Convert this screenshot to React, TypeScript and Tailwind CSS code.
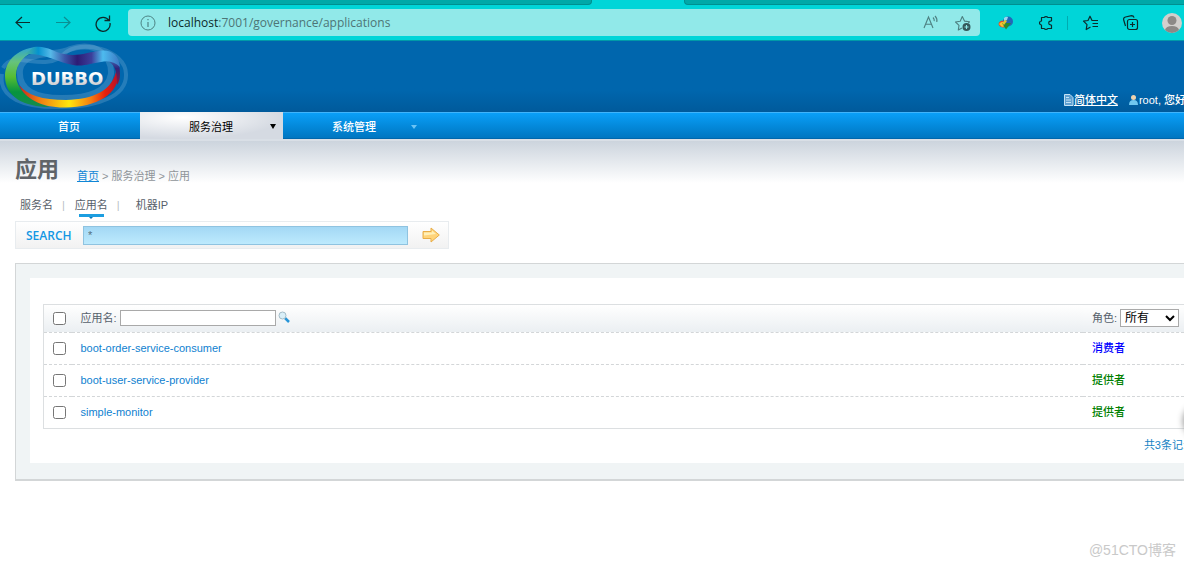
import React, { useState } from 'react';

interface Application {
  name: string;
  role: 'consumer' | 'provider';
}

const applications: Application[] = [
  { name: 'boot-order-service-consumer', role: 'consumer' },
  { name: 'boot-user-service-provider', role: 'provider' },
  { name: 'simple-monitor', role: 'provider' },
];

const roleLabels = {
  consumer: '消费者',
  provider: '提供者',
};

function BrowserBar() {
  return (
    <div className="bg-[#00d5d8] font-['Open_Sans','Noto_Sans',sans-serif]">
      {/* Bottom edge of the tab strip */}
      <div className="flex h-[5px]">
        <div className="w-1/2 rounded-br-sm border-b border-r border-[#008f90] bg-[#00a8a8]" />
        <div className="w-[92px] shrink-0" />
        <div className="flex-1 rounded-bl-sm border-b border-l border-[#008f90] bg-[#00a8a8]" />
      </div>

      <div className="flex h-9 items-center border-b border-[#009aa8]">
        <button aria-label="Back" className="ml-3.5 text-[#0c2b2c]">
          <svg width="18" height="18" viewBox="0 0 18 18" fill="none" stroke="currentColor" strokeWidth="1.2">
            <path d="M16 8.500H2M8 3L2 8.500l6 5.500" />
          </svg>
        </button>
        <button aria-label="Forward" className="ml-[22px] text-[#0b8f92]">
          <svg width="18" height="18" viewBox="0 0 18 18" fill="none" stroke="currentColor" strokeWidth="1.2">
            <path d="M2 8.500h14M10 3l6 5.500-6 5.500" />
          </svg>
        </button>
        <button aria-label="Refresh" className="ml-[22px] text-[#0c2b2c]">
          <svg width="18" height="18" viewBox="0 0 18 18" fill="none" stroke="currentColor" strokeWidth="1.3">
            <path d="M15 6.500A7 7 0 1 0 16 9M15.500 1.500v5h-5" />
          </svg>
        </button>

        <div className="ml-4 flex h-[27px] min-w-0 flex-1 items-center rounded bg-[#91e9e9] px-3">
          <svg className="shrink-0" width="16" height="16" viewBox="0 0 16 16" fill="none" stroke="#4d8485">
            <circle cx="8" cy="8" r="7" />
            <path d="M8 7v5M8 4v1.300" strokeWidth="1.200" />
          </svg>
          <p className="ml-3 flex-1 text-xs text-[#4d7576]">
            <span className="text-[#0c2b2c]">localhost</span>:7001/governance/applications
          </p>
          <button aria-label="Read aloud" className="text-[#4d7f80]">
            <svg width="18" height="18" viewBox="0 0 18 18" fill="none" stroke="currentColor" strokeWidth="1.1">
              <path d="M1 14L5.500 3 10 14M2.600 10.300h5.800M10 3.500q1.600 1.500 1.200 3.700M12 2q2.600 2.500 1.800 6" />
            </svg>
          </button>
          <button aria-label="Add to favorites" className="ml-[13px] -mr-1 text-[#4d7f80]">
            <svg width="18" height="18" viewBox="0 0 18 18" fill="none" stroke="currentColor" strokeWidth="1.1" strokeLinejoin="round">
              <path d="M8 14l-3.700 2 .700-4.700L1.500 8l4.700-.8L8.300 2.500l2.200 4.600 5 .7-1.200 1.200" />
              <circle cx="12.500" cy="13" r="4" fill="#35595b" stroke="none" />
              <path d="M12.500 11v4M10.500 13h4" stroke="#91e9e9" />
            </svg>
          </button>
        </div>

        <button aria-label="Download manager" className="ml-[18px]">
          <svg width="16" height="16" viewBox="0 0 16 16">
            <ellipse cx="5.500" cy="9" rx="5" ry="3.500" fill="#e5482c" />
            <path d="M1 9q2-3 7-2l2 3-6 2z" fill="#f5c531" />
            <circle cx="10" cy="6.500" r="5" fill="#2466b8" />
            <path d="M6 3q2-2 4-1l-1 3-3 1z" fill="#9cd4ee" />
            <path d="M4 8h9l-5 6.500z" fill="#2d8a32" />
            <path d="M4 8l3-3 2 1-3 4z" fill="#e7c22d" />
          </svg>
        </button>
        <button aria-label="Extensions" className="ml-6 text-[#0c2b2c]">
          <svg width="16" height="16" viewBox="0 0 16 16" fill="none" stroke="currentColor" strokeWidth="1.2" strokeLinejoin="round">
            <path d="M3.500 2.500h2.700a2 1.700 0 0 1 3.600 0h3.700v3.300l-1 .4a1.800 1.800 0 0 0 0 3.600l1 .4v3.300H9.800a2 1.700 0 0 1-3.600 0H3.500V10a2 2 0 0 1 0-4z" />
          </svg>
        </button>
        <span className="ml-[13px] h-3.5 w-px bg-[#00abb0]" />
        <button aria-label="Favorites" className="ml-3.5 text-[#0c2b2c]">
          <svg width="18" height="18" viewBox="0 0 18 18" fill="none" stroke="currentColor" strokeWidth="1.2" strokeLinejoin="round">
            <path d="M8.500 13L4.200 15.500l.800-4.800L1.500 7.200l4.500-.7L8 2.200l2 4.300h6M10.500 9.500H16M10.500 12.500H16" />
          </svg>
        </button>
        <button aria-label="Collections" className="ml-[22px] text-[#0c2b2c]">
          <svg width="18" height="18" viewBox="0 0 18 18" fill="none" stroke="currentColor" strokeWidth="1.2">
            <rect x="5.500" y="5.500" width="10" height="10" rx="2" />
            <path d="M10.500 8v5M8 10.500h5M3.500 12L1.700 6A2.500 2.500 0 0 1 3.500 3l6-1.300q2 0 2.600 2" />
          </svg>
        </button>
        <button aria-label="Profile" className="ml-[22px] mr-0.5">
          <svg width="20" height="20" viewBox="0 0 20 20">
            <circle cx="10" cy="10" r="10" fill="#d2cfcd" />
            <circle cx="10" cy="7.500" r="4.500" fill="#8c8987" />
            <path d="M3 17q1-4 7-4t7 4q-3 3-7 3t-7-3z" fill="#8c8987" />
          </svg>
        </button>
      </div>
    </div>
  );
}

function DubboLogo() {
  return (
    <svg width="130" height="70" viewBox="0 1 130 70" role="img" aria-label="Dubbo">
      <defs>
        <linearGradient id="left" x1="0.6" y1="0" x2="0.6" y2="1">
          <stop offset="0" stopColor="#2aa3d4" />
          <stop offset="0.25" stopColor="#66c37c" />
          <stop offset="0.5" stopColor="#56bd32" />
          <stop offset="0.75" stopColor="#069440" />
          <stop offset="1" stopColor="#178a4c" />
        </linearGradient>
        <linearGradient id="top" x1="0" y1="0" x2="1" y2="0">
          <stop offset="0" stopColor="#4db39c" />
          <stop offset="0.14" stopColor="#0593cf" />
          <stop offset="0.27" stopColor="#56b9e8" />
          <stop offset="0.42" stopColor="#3a55a8" />
          <stop offset="0.55" stopColor="#2c1c75" />
          <stop offset="0.7" stopColor="#3b3f9b" />
          <stop offset="0.82" stopColor="#4dbbef" />
          <stop offset="1" stopColor="#3c78c4" />
        </linearGradient>
        <linearGradient id="bottom" x1="0" y1="0" x2="1" y2="0">
          <stop offset="0" stopColor="#c9241c" />
          <stop offset="0.2" stopColor="#ee7a12" />
          <stop offset="0.5" stopColor="#ffe70c" />
          <stop offset="0.72" stopColor="#f57c10" />
          <stop offset="0.86" stopColor="#e8200c" />
          <stop offset="1" stopColor="#b3102c" />
        </linearGradient>
        <linearGradient id="right" x1="0" y1="0" x2="0" y2="1">
          <stop offset="0" stopColor="#4fa9e4" />
          <stop offset="0.5" stopColor="#30247c" />
          <stop offset="1" stopColor="#a0142e" />
        </linearGradient>
        <linearGradient id="letters" x1="0" y1="0" x2="0" y2="1">
          <stop offset="0.3" stopColor="#ffffff" />
          <stop offset="1" stopColor="#b9bcc2" />
        </linearGradient>
      </defs>
      {/* Pale rings behind the ribbon */}
      <g fill="none" stroke="#9ac9e8" strokeOpacity="0.24">
        <path d="M3 28C14 8 44 34 64 14 80 -2 126 10 126 34 127 56 98 67 62 67 24 68-2 58 2 34" strokeWidth="4" />
        <path d="M20 30C22 10 58 16 70 9 98 0 112 18 111 34 108 52 88 58 62 58 35 58 18 50 20 30z" strokeWidth="6" />
      </g>
      <path d="M40 7C19 7 5 20 5 36 5 57 24 67 50 67 34 62 16 52 16 35 16 24 24 14 40 9z" fill="url(#left)" />
      <path d="M19 45C27 55 42 60 66 60 94 59 111 51 116 32l3-2C120 55 96 67 66 67.500 42 68 25 59 19 45z" fill="url(#bottom)" />
      <path d="M108 12C117 15 120 22 120 34c0 5-1 8-3 11 0-9 0-19-9-24z" fill="url(#right)" />
      <path d="M34 7C46 5 54 12 64 14 78 17 88 12 99 11 111 9 119 15 120 27 115 22 108 20 101 22 91 23 84 27 73 25 57 22 45 13 25 14z" fill="url(#top)" />
      <text x="31" y="45" fontSize="18" fontWeight="bold" fill="url(#letters)" className="font-['DejaVu_Sans',sans-serif]">
        DUBBO
      </text>
    </svg>
  );
}

function Header() {
  return (
    <header className="flex h-[71px] items-end justify-between bg-linear-to-b from-[#0066ad] from-70% to-[#005a9b]">
      <a href="#home" className="self-start">
        <DubboLogo />
      </a>
      <div className="-mr-0.5 mb-1 flex items-center whitespace-nowrap leading-4 text-white">
        <svg width="10" height="12" viewBox="0 0 10 12" fill="#5fa0d0" stroke="#c4e2f5">
          <path d="M.5.5H6l3 3v8H.5zM2 3.500h3M2 6h5M2 8.500h5" />
        </svg>
        <a href="#language" className="font-medium underline">简体中文</a>
        <svg className="ml-2.5" width="11" height="12" viewBox="0 0 11 12">
          <path d="M1 11q0-5 4.500-5T10 11z" fill="#6fc7f0" />
          <circle cx="5.500" cy="3.500" r="2.500" fill="#ecd3b0" />
        </svg>
        <span className="font-medium">root, 您好</span>
      </div>
    </header>
  );
}

function MainNav() {
  return (
    <nav className="flex h-[27px] border-b border-t border-b-[#0067ad] border-t-[#40b4fb] bg-linear-to-b from-[#0a9ff8] to-[#0076c1] font-medium text-white">
      <a href="#home" className="flex w-[140px] items-center justify-center pr-0.5 pt-0.5">首页</a>
      <a
        href="#governance"
        className="-my-px flex w-[143px] items-center justify-center bg-radial-[at_30%_20%] from-white to-[#d5dae2] to-70% pt-0.5 font-normal text-black"
      >
        <span className="flex-1 pl-[49px]">服务治理</span>
        <span className="mr-[7px] border-x-[3px] border-t-[5px] border-x-transparent border-t-black" />
      </a>
      <a href="#system" className="flex w-[141px] items-center justify-center pt-0.5">
        <span className="flex-1 pl-[49px]">系统管理</span>
        <span className="mr-[7px] border-x-[3px] border-t-4 border-x-transparent border-t-[#6cc4f5]" />
      </a>
    </nav>
  );
}

function SearchBar() {
  const [keyword, setKeyword] = useState('*');

  return (
    <form className="flex h-7 w-[434px] items-center border border-[#e8ecef] bg-linear-to-b from-white to-[#f2f2f2] pl-2.5">
      <label htmlFor="keyword" className="w-[57px] pt-px font-['Open_Sans',sans-serif] text-xs font-semibold text-[#1497e4]">
        SEARCH
      </label>
      <input
        id="keyword"
        value={keyword}
        onChange={(e) => setKeyword(e.target.value)}
        className="h-[19px] w-[325px] border border-[#8fc3e0] bg-linear-to-b from-[#a3d8f5] to-[#bdeafd] px-1 text-[#56707c] outline-none"
      />
      <button type="submit" aria-label="Search" className="ml-3.5">
        <svg width="18" height="16" viewBox="0 0 18 16">
          <path d="M1 4.500h8V1L17.300 8 9 15v-3.500H1z" fill="#ffd47a" stroke="#e8ad48" strokeLinejoin="round" />
          <path d="M2 5.500h8V3.500l4 3.500-12 1.500z" fill="#fff0b8" />
        </svg>
      </button>
    </form>
  );
}

function ApplicationTable() {
  return (
    <table className="w-full table-fixed border-collapse border-y border-l border-[#dcdfe1] text-left">
      <thead>
        <tr className="h-7 border-b border-dashed border-[#d3d6d8] bg-linear-to-b from-white to-[#ebeff2] text-[#55606b]">
          <th className="w-7 pl-[9px]">
            <input type="checkbox" aria-label="全选" className="block size-[13px]" />
          </th>
          <th className="pb-0.5 pl-[9px] font-normal">
            <div className="flex items-center">
              <label htmlFor="name-filter" className="mr-[3px]">应用名:</label>
              <input id="name-filter" className="h-4 w-[156px] border border-[#a9a9a9] bg-white px-1 text-black" />
              <svg className="mb-0.5 ml-0.5" width="12" height="12" viewBox="0 0 12 12">
                <path d="M7 7l4 4" stroke="#2795d8" strokeWidth="2.500" />
                <circle cx="4.500" cy="4.500" r="3.500" fill="#d9eff8" stroke="#a3bcc8" />
              </svg>
            </div>
          </th>
          <th className="w-[101px] pb-0.5 pl-[9px] font-normal">
            <div className="flex items-center">
              <label htmlFor="role-filter" className="mr-[3px]">角色:</label>
              <select id="role-filter" className="h-[18px] w-[59px] border border-[#a9a9a9] bg-white text-xs leading-4 text-black">
                <option>所有</option>
                <option>消费者</option>
                <option>提供者</option>
              </select>
            </div>
          </th>
        </tr>
      </thead>
      <tbody>
        {applications.map((app) => (
          <tr key={app.name} className="h-8 border-t border-dashed border-[#d3d6d8]">
            <td className="pl-[9px]">
              <input type="checkbox" aria-label={app.name} className="block size-[13px]" />
            </td>
            <td className="pb-0.5 pl-[9px]">
              <a href={`#${app.name}`} className="text-[#0f7fd0]">{app.name}</a>
            </td>
            <td className={app.role === 'consumer' ? 'pb-0.5 pl-[9px] font-medium text-[#0000ff]' : 'pb-0.5 pl-[9px] font-medium text-[#008000]'}>
              {roleLabels[app.role]}
            </td>
          </tr>
        ))}
      </tbody>
    </table>
  );
}

export default function App() {
  return (
    <div className="relative min-h-screen overflow-hidden bg-white font-['Liberation_Sans','Noto_Sans_CJK_SC',sans-serif] text-[11px] leading-4">
      <BrowserBar />
      <Header />
      <MainNav />

      <main className="border-t-2 border-[#d9dfe6] bg-linear-to-b from-[#ccd4dd] to-white to-[42px] pl-[15px] pt-[15px]">
        <div className="flex items-end">
          <h1 className="text-[22px] font-bold leading-7 text-[#606468]">应用</h1>
          <p className="ml-[18px] text-[#8f9499]">
            <a href="#home" className="text-[#0f86d6] underline">首页</a> &gt; 服务治理 &gt; 应用
          </p>
        </div>

        {/* Sub navigation */}
        <div className="ml-[5px] mt-[13px] flex items-start text-[#57606a]">
          <a href="#services">服务名</a>
          <span className="ml-[9px] mr-2.5 text-[#b9bfc5]">|</span>
          <a href="#applications" className="flex flex-col items-center">
            应用名
            <span className="mt-px h-[3px] w-[25px] bg-[#1c9ee0]" />
            <span className="border-x-2 border-t-2 border-x-transparent border-t-[#0a76b8]" />
          </a>
          <span className="ml-[9px] mr-4 text-[#b9bfc5]">|</span>
          <a href="#machines">机器IP</a>
        </div>

        <div className="mt-0.5">
          <SearchBar />
        </div>

        <section className="mt-3.5 border-b-2 border-l border-t border-[#d3d6d7] bg-[#f0f4f5] pb-4 pl-3.5 pt-3.5">
          <div className="bg-white pb-2.5 pl-[13px] pt-[26px]">
            <ApplicationTable />
            <p className="-mr-2.5 mt-2 text-right text-[#1583c4]">共3条记录</p>
          </div>
        </section>
      </main>

      <p className="mr-2 mt-[59px] text-right text-sm leading-5 text-[#c9c9c9]">@51CTO博客</p>

      {/* Edge of the floating side button */}
      <div className="absolute -right-8 top-[405px] size-8 rounded-full bg-white shadow-[0_0_6px_1px_#999]" />
    </div>
  );
}
